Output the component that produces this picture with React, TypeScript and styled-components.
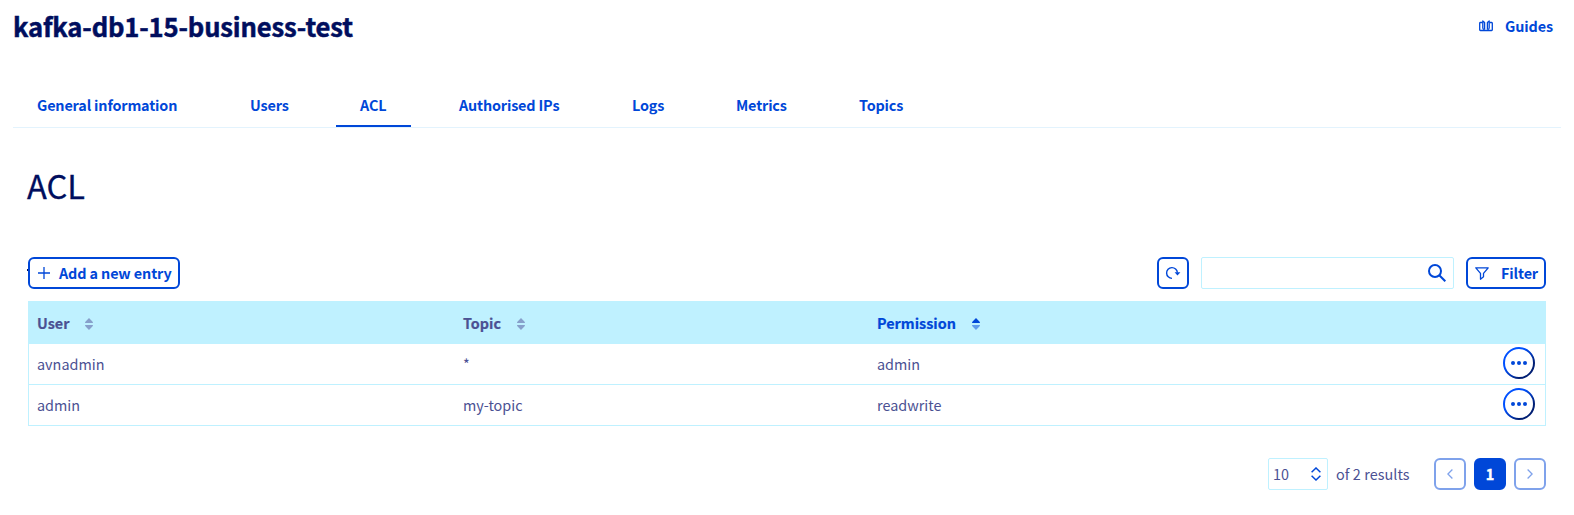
import React from "react";
import styled, { createGlobalStyle, css } from "styled-components";

const blue = "#0047d8";
const navy = "#000e5e";
const slate = "#4b5193";
const cyan = "#bff1ff";

const GlobalStyle = createGlobalStyle`
  *, *::before, *::after { box-sizing: border-box; }
  body {
    margin: 0;
    background: #fff;
    color: ${slate};
    font-family: "Noto Sans CJK SC", "Noto Sans", sans-serif;
    font-size: 14.4px;
    line-height: 20px;
    overflow: hidden;
  }
  button, input { font: inherit; }
  svg { display: block; flex: none; }
`;

const Page = styled.div`
  width: 1574px;
  height: 515px;
  padding: 0 13px;
`;

const Header = styled.header`
  display: flex;
  justify-content: space-between;
  height: 90px;
  padding: 7px 8px 0 0;
`;

const Title = styled.h1`
  margin: 0;
  color: ${navy};
  font-size: 25.6px;
  font-weight: 700;
  line-height: 38px;
  letter-spacing: -0.15px;
  white-space: nowrap;
  -webkit-text-stroke: 0.5px ${navy};
`;

const GuidesLink = styled.a`
  display: flex;
  align-items: center;
  gap: 12px;
  height: 38px;
  color: ${blue};
  font-weight: 700;
  letter-spacing: -0.1px;
`;

const Tabs = styled.nav`
  display: flex;
  gap: 24px;
  height: 38px;
  border-bottom: 1px solid #e3f3fd;
`;

const Tab = styled.a<{ $active?: boolean; $width: number }>`
  width: ${(p) => p.$width}px;
  height: 37px;
  padding: 5px 0 0 24px;
  color: ${blue};
  font-weight: 700;
  letter-spacing: -0.16px;
  white-space: nowrap;
  border-bottom: 2px solid ${(p) => (p.$active ? blue : "transparent")};
`;

const Content = styled.main`
  padding: 32px 15px 0;
`;

const SectionTitle = styled.h2`
  margin: 0 0 47px -1px;
  color: ${navy};
  font-size: 32.6px;
  font-weight: 400;
  line-height: 50px;
  -webkit-text-stroke: 0.3px ${navy};
`;

const Toolbar = styled.div`
  display: flex;
  gap: 12px;
  margin-bottom: 12px;
`;

const outlined = css`
  display: flex;
  align-items: center;
  height: 32px;
  padding: 0;
  background: #fff;
  color: ${blue};
  border: 2px solid ${blue};
  border-radius: 6px;
  font-weight: 700;
  letter-spacing: -0.12px;
  white-space: nowrap;
`;

const AddButton = styled.button`
  ${outlined}
  position: relative;
  width: 152px;
  margin-right: auto;
  padding-left: 8px;
  gap: 9px;

  &::before {
    content: "";
    position: absolute;
    left: -3px;
    top: 10px;
    width: 1px;
    height: 2px;
    background: ${navy};
  }
`;

const RefreshButton = styled.button`
  ${outlined}
  width: 32px;
  justify-content: center;
`;

const FilterButton = styled.button`
  ${outlined}
  width: 80px;
  padding-left: 7px;
  gap: 12px;
`;

const Search = styled.label`
  display: flex;
  align-items: center;
  width: 253px;
  height: 32px;
  padding-right: 7px;
  border: 1px solid ${cyan};
  border-radius: 2px;
`;

const SearchInput = styled.input`
  flex: 1;
  min-width: 0;
  border: 0;
  outline: 0;
  background: transparent;
`;

const Table = styled.div`
  border: 1px solid ${cyan};
  border-top: 0;
`;

const Row = styled.div`
  display: grid;
  grid-template-columns: 426px 414px 1fr 50px;
  height: 41px;
  padding: 0 10px 0 8px;

  & + & { border-top: 1px solid ${cyan}; }
`;

const HeadRow = styled(Row)`
  height: 43px;
  background: ${cyan};

  & + ${Row} { border-top: 0; height: 40px; }
`;

const HeadCell = styled.div<{ $active?: boolean }>`
  display: flex;
  align-items: center;
  gap: 16px;
  padding-top: 1px;
  color: ${(p) => (p.$active ? blue : slate)};
  font-weight: 700;
  -webkit-text-stroke: 0.2px currentColor;

  svg { margin-top: 2px; }
`;

const Cell = styled.div`
  padding-top: 10px;
`;

const ActionCell = styled.div`
  display: flex;
  justify-content: flex-end;
  padding-top: 3px;
`;

const MoreButton = styled.button`
  width: 32px;
  height: 32px;
  padding: 0;
  border: 0;
  background: none;
`;

const Footer = styled.footer`
  display: flex;
  justify-content: flex-end;
  padding-top: 32px;
`;

const PageSize = styled.div`
  display: flex;
  align-items: center;
  justify-content: space-between;
  width: 60px;
  height: 32px;
  margin-right: 8px;
  padding: 0 6px 0 4px;
  border: 1px solid ${cyan};
  border-radius: 2px;
`;

const Results = styled.span`
  width: 98px;
  line-height: 31px;
  letter-spacing: 0.07px;
  white-space: nowrap;
`;

const Pager = styled.div`
  display: flex;
  gap: 8px;
`;

const PageButton = styled.button<{ $current?: boolean }>`
  ${outlined}
  width: 32px;
  justify-content: center;
  ${(p) =>
    p.$current
      ? css`background: ${blue}; color: #fff; -webkit-text-stroke: 0.4px #fff;`
      : css`border-color: #7fa2eb; color: #7fa2eb;`}
`;

const SortIcon = ({ up }: { up?: boolean }) => (
  <svg width="8" height="12" viewBox="0 0 8 12">
    <path d="M0 5 Q0 4.2 .6 3.6 L4 0 L7.4 3.6 Q8 4.2 8 5Z" fill={up ? blue : "#87a0cb"} />
    <path d="M0 7 Q0 7.8 .6 8.4 L4 12 L7.4 8.4 Q8 7.8 8 7Z" fill={up ? "#5f9cec" : "#87a0cb"} />
  </svg>
);

const GuidesIcon = () => (
  <svg width="14" height="12" viewBox="0 0 14 12" fill="none" stroke={blue} strokeWidth="1.3" strokeLinejoin="round">
    <path d="M3.5 2.5H1.4Q.7 2.5 .7 3.2V9.8Q.7 10.5 1.4 10.5H12.6Q13.3 10.5 13.3 9.8V3.2Q13.3 2.5 12.6 2.5H10.5" />
    <path d="M5.6 9.6Q3.8 9.4 3.8 8V1L5.6 2.4V9.6M8.4 9.6Q10.2 9.4 10.2 8V1L8.4 2.4V9.6" />
  </svg>
);

const MoreIcon = () => (
  <svg width="32" height="32" viewBox="0 0 32 32">
    <defs>
      <linearGradient id="ring" x1="0" y1="0" x2="1" y2="1">
        <stop offset=".35" stopColor="#0050ff" />
        <stop offset=".75" stopColor="#001e73" />
      </linearGradient>
    </defs>
    <circle cx="16" cy="16" r="15" fill="#fff" stroke="url(#ring)" strokeWidth="2" />
    <g fill={blue}>
      <circle cx="10" cy="16" r="2" />
      <circle cx="16" cy="16" r="2" />
      <circle cx="22" cy="16" r="2" />
    </g>
  </svg>
);

const tabs = [
  { name: "General information", width: 189 },
  { name: "Users", width: 86 },
  { name: "ACL", width: 75, active: true },
  { name: "Authorised IPs", width: 149 },
  { name: "Logs", width: 80 },
  { name: "Metrics", width: 99 },
  { name: "Topics", width: 92 },
];

const rows = [
  { user: "avnadmin", topic: "*", permission: "admin" },
  { user: "admin", topic: "my-topic", permission: "readwrite" },
];

export default function App() {
  return (
    <>
      <GlobalStyle />
      <Page>
        <Header>
          <Title>kafka-db1-15-business-test</Title>
          <GuidesLink><GuidesIcon />Guides</GuidesLink>
        </Header>
        <Tabs>
          {tabs.map((t) => (
            <Tab key={t.name} $width={t.width} $active={t.active}>{t.name}</Tab>
          ))}
        </Tabs>
        <Content>
          <SectionTitle>ACL</SectionTitle>
          <Toolbar>
            <AddButton>
              <svg width="12" height="12" viewBox="0 0 12 12" stroke={blue} strokeWidth="1.3">
                <path d="M0 6H12M6 0V12" />
              </svg>
              Add a new entry
            </AddButton>
            <RefreshButton aria-label="Refresh">
              <svg width="16" height="14" viewBox="0 0 16 14" fill="none" stroke={blue} strokeWidth="1.4">
                <path d="M7 12.4A5.4 5.4 0 1 1 12.4 6.6" />
                <path d="M9.6 6.3H15.4L12.5 9.4Z" fill={blue} stroke="none" />
              </svg>
            </RefreshButton>
            <Search>
              <SearchInput aria-label="Search" />
              <svg width="18" height="18" viewBox="0 0 18 18" fill="none" stroke={blue} strokeWidth="2">
                <circle cx="7" cy="7" r="6" />
                <path d="M11.3 11.3L17.3 17.3" />
              </svg>
            </Search>
            <FilterButton>
              <svg width="14" height="13" viewBox="0 0 14 13" fill="none" stroke={blue} strokeWidth="1.3" strokeLinejoin="round">
                <path d="M.8 .8H13.2L8.5 6.4V9.8L5.5 12.2V6.4Z" />
              </svg>
              Filter
            </FilterButton>
          </Toolbar>
          <Table>
            <HeadRow>
              <HeadCell>User<SortIcon /></HeadCell>
              <HeadCell>Topic<SortIcon /></HeadCell>
              <HeadCell $active>Permission<SortIcon up /></HeadCell>
            </HeadRow>
            {rows.map((r) => (
              <Row key={r.user}>
                <Cell>{r.user}</Cell>
                <Cell>{r.topic}</Cell>
                <Cell>{r.permission}</Cell>
                <ActionCell><MoreButton aria-label="Actions"><MoreIcon /></MoreButton></ActionCell>
              </Row>
            ))}
          </Table>
          <Footer>
            <PageSize>
              10
              <svg width="10" height="14" viewBox="0 0 10 14" fill="none" stroke={blue} strokeWidth="1.5">
                <path d="M.6 5.2L5 1L9.4 5.2M.6 8.8L5 13L9.4 8.8" />
              </svg>
            </PageSize>
            <Results>of 2 results</Results>
            <Pager>
              <PageButton aria-label="Previous">
                <svg width="6" height="10" viewBox="0 0 6 10" fill="none" stroke="#7fa2eb" strokeWidth="1.3"><path d="M5.4 .5L.9 5L5.4 9.5" /></svg>
              </PageButton>
              <PageButton $current>1</PageButton>
              <PageButton aria-label="Next">
                <svg width="6" height="10" viewBox="0 0 6 10" fill="none" stroke="#7fa2eb" strokeWidth="1.3"><path d="M.6 .5L5.1 5L.6 9.5" /></svg>
              </PageButton>
            </Pager>
          </Footer>
        </Content>
      </Page>
    </>
  );
}
